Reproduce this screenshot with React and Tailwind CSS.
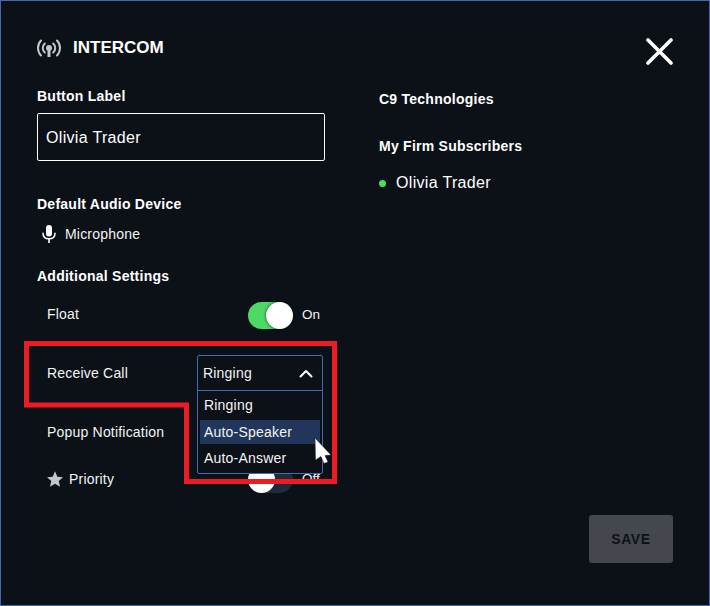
import React from "react";

const Toggle = ({ on }) => (
  <div className={`relative w-[45px] h-[27px] rounded-full ${on ? "bg-[#4cd964]" : "bg-[#1f2a3d]"}`}>
    <div className={`absolute top-0 w-[27px] h-[27px] rounded-full bg-white ${on ? "right-0 shadow-[0_0_3px_rgba(0,0,0,0.8)]" : "left-0"}`} />
  </div>
);

const Tower = () => (
  <svg width="24" height="18" viewBox="0 0 24 18" fill="none" stroke="#c4c6c9" strokeWidth="2" strokeLinecap="round">
    <circle cx="12" cy="9" r="3" fill="#c4c6c9" stroke="none" />
    <path d="M12 9v9" strokeWidth="3" strokeLinecap="butt" />
    <path d="M7.800 4.500a6 6 0 0 0 0 9" />
    <path d="M16.200 4.500a6 6 0 0 1 0 9" />
    <path d="M4 1.500a10.900 10.900 0 0 0 0 15" />
    <path d="M20 1.500a10.900 10.900 0 0 1 0 15" />
  </svg>
);

const Mic = () => (
  <svg width="14" height="18" viewBox="0 0 14 18" fill="none">
    <rect x="4" y="0" width="6" height="11.500" rx="3" fill="#fff" />
    <path d="M1 8.200c0 3.600 2.600 5.600 6 5.600s6-2 6-5.600" stroke="#fff" strokeWidth="1.500" strokeLinecap="round" />
    <path d="M7 13.800V18" stroke="#fff" strokeWidth="1.600" />
  </svg>
);

const Star = () => (
  <svg width="16" height="16" viewBox="0 0 24 24" fill="#c4c6c9" className="-mt-[2px]">
    <path d="M12 .5l3.500 8 8.500.8-6.400 5.700 1.900 8.500L12 19l-7.500 4.500 1.900-8.500L0 9.300l8.500-.8z" />
  </svg>
);

export default function App() {
  return (
    <div className="relative flex w-[710px] h-[606px] border border-[#3b69b3] bg-[#0c1118] text-white font-['Liberation_Sans',Arial,sans-serif] overflow-hidden">
      <div className="w-[288px] ml-[36px] pt-[35px] shrink-0 flex flex-col">
        <div className="flex items-center h-[24px] font-bold text-[17px]">
          <Tower />
          <span className="ml-[12px]">INTERCOM</span>
        </div>
        <div className="mt-[26px] h-[20px] leading-[20px] text-[14px] font-bold tracking-[0.25px]">Button Label</div>
        <div className="mt-[7px] h-[48px] border border-white rounded-[2px] flex items-center pl-[8px] pt-[2px] text-[16px] tracking-[0.32px]">Olivia Trader</div>
        <div className="mt-[33px] h-[20px] leading-[20px] text-[14px] font-bold tracking-[0.25px]">Default Audio Device</div>
        <div className="mt-[8px] h-[24px] flex items-center pl-[5px] text-[14px] text-[#f2f3f4] tracking-[0.2px]">
          <Mic />
          <span className="ml-[9px]">Microphone</span>
        </div>
        <div className="mt-[20px] h-[20px] leading-[20px] text-[14px] font-bold tracking-[0.25px]">Additional Settings</div>
        <div className="mt-[16px] h-[27px] flex items-center pl-[10px] text-[14px] text-[#f2f3f4]">
          <span className="w-[201px] -mt-[3px] tracking-[0.2px]">Float</span>
          <Toggle on />
          <span className="ml-[9px] text-[13.5px]">On</span>
        </div>
        <div className="relative z-10 mt-[26px] h-[36px] flex items-center pl-[10px] text-[14px] text-[#f2f3f4] tracking-[0.2px]">
          <span className="w-[150px]">Receive Call</span>
          <div className="absolute left-[160px] top-0 w-[126px] rounded-[2px] border border-[#3f6cb5] bg-[#0c1118]">
            <div className="h-[35px] flex items-center justify-between pl-[5px] pr-[9px] border-b border-[#3f6cb5]">
              <span>Ringing</span>
              <svg width="14" height="9" viewBox="0 0 14 9" fill="none" stroke="#fff" strokeWidth="2" strokeLinecap="round" strokeLinejoin="round">
                <path d="M1.500 7.500L7 2l5.500 5.500" />
              </svg>
            </div>
            <div className="py-[2px] px-[2px]">
              <div className="h-[24px] mb-[3px] flex items-center pl-[4px]">Ringing</div>
              <div className="h-[24px] mb-[2px] flex items-center pl-[4px] bg-[#22365c]">Auto-Speaker</div>
              <div className="h-[24px] mb-[1px] flex items-center pl-[4px]">Auto-Answer</div>
            </div>
          </div>
        </div>
        <div className="mt-[31px] h-[20px] flex items-center pl-[10px] text-[14px] text-[#f2f3f4] tracking-[0.2px]">Popup Notification</div>
        <div className="mt-[24px] h-[27px] flex items-center pl-[10px] text-[14px] text-[#f2f3f4]">
          <Star />
          <span className="ml-[6px] w-[179px] -mt-[1px] tracking-[0.2px]">Priority</span>
          <Toggle />
          <span className="ml-[9px] text-[13.5px]">Off</span>
        </div>
      </div>

      <div className="flex-1 ml-[54px] mr-[36px] pt-[37px] pb-[42px] flex flex-col">
        <div className="flex justify-end h-[27px]">
          <svg width="27" height="27" viewBox="0 0 27 27" fill="none" stroke="#fff" strokeWidth="3.600" strokeLinecap="round">
            <path d="M2 2l23 23M25 2L2 25" />
          </svg>
        </div>
        <div className="mt-[24px] h-[20px] leading-[20px] text-[14px] font-bold tracking-[0.25px]">C9 Technologies</div>
        <div className="mt-[27px] h-[20px] leading-[20px] text-[14px] font-bold tracking-[0.25px]">My Firm Subscribers</div>
        <div className="mt-[14px] h-[24px] flex items-center text-[16px] tracking-[0.32px]">
          <span className="w-[7px] h-[7px] rounded-full bg-[#4cd964] mt-[2px]" />
          <span className="ml-[10px] pt-[2px]">Olivia Trader</span>
        </div>
        <button className="mt-auto self-end w-[84px] h-[48px] rounded-[3px] bg-[#44484e] text-[#0c1118] text-[14px] font-bold tracking-[0.6px]">SAVE</button>
      </div>

      {/* annotation overlay */}
      <svg className="absolute -left-px -top-px z-20 pointer-events-none" width="710" height="606" viewBox="0 0 710 606" fill="none">
        <path d="M26.500 343.500H334.500V481.500H186.500V405H26.500Z" stroke="#ed1c24" strokeWidth="5" />
        <path d="M315 438L331 455L325 455.500L328 462L324 463.500L321 456.500L315.500 460Z" fill="#fff" stroke="#1a1a1a" strokeWidth="0.5" />
      </svg>
    </div>
  );
}
